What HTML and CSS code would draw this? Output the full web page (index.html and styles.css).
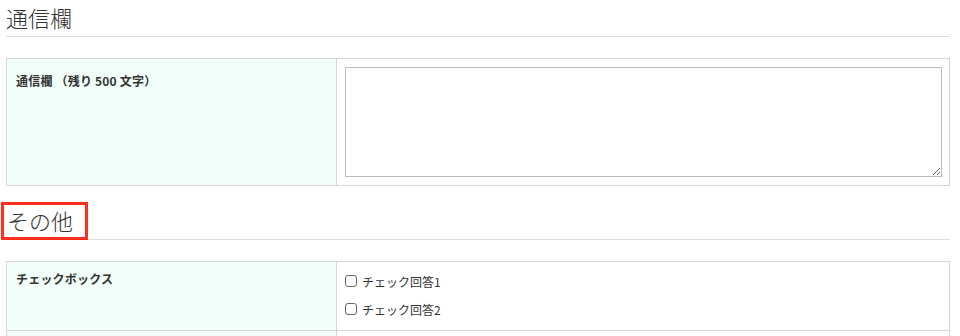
FILE: index.html
```html
<!DOCTYPE html>
<html lang="ja">
<head>
<meta charset="utf-8">
<title>フォーム</title>
<link rel="stylesheet" href="styles.css">
</head>
<body>
<div class="page">
  <h2 class="sec-title sec-title--first">通信欄</h2>
  <table class="form-table">
    <tr>
      <th class="label label--tall">通信欄 （残り 500 文字）</th>
      <td class="field field--textarea"><textarea class="memo"></textarea></td>
    </tr>
  </table>

  <h2 class="sec-title"><span class="hl">その他</span></h2>
  <table class="form-table">
    <tr>
      <th class="label">チェックボックス</th>
      <td class="field field--checks">
        <label class="check"><input type="checkbox" class="cb"><span>チェック回答1</span></label>
        <label class="check"><input type="checkbox" class="cb"><span>チェック回答2</span></label>
      </td>
    </tr>
    <tr>
      <th class="label">&nbsp;</th>
      <td class="field">&nbsp;</td>
    </tr>
  </table>
</div>
</body>
</html>
```

FILE: styles.css
```css
html, body {
  margin: 0;
  padding: 0;
  background: #fff;
}
body {
  font-family: "Noto Sans CJK JP", "Noto Sans", "Liberation Sans", sans-serif;
  color: #333;
}
.page {
  width: 944px;
  padding-left: 6px;
}
.sec-title {
  margin: 19px 0 0;
  padding: 0 0 4px;
  font-size: 22px;
  line-height: 30px;
  font-weight: 300;
  color: #333;
  border-bottom: 1px solid #dcdcdc;
}
.sec-title--first {
  margin-top: 2px;
}
.hl {
  position: relative;
  display: inline-block;
  padding-left: 1px;
}
.hl::after {
  content: "";
  position: absolute;
  left: -5px;
  top: -3px;
  width: 87px;
  height: 38px;
  box-sizing: border-box;
  border: 3px solid #ff2d1a;
}
.form-table {
  width: 100%;
  margin-top: 21px;
  border-collapse: collapse;
  table-layout: fixed;
}
.form-table th,
.form-table td {
  border: 1px solid #d6d6d6;
  vertical-align: top;
}
.label {
  width: 312px;
  padding: 9px 8px 8px 9px;
  background: #f1fff8;
  text-align: left;
  font-size: 12px;
  line-height: 16px;
  font-weight: bold;
  color: #333;
  letter-spacing: 0.2px;
}
.label--tall {
  padding-top: 14px;
}
.field {
  padding: 8px;
  font-size: 12px;
}
.field--textarea {
  padding: 8px 7px 8px 8px;
}
.memo {
  display: block;
  width: 100%;
  height: 110px;
  box-sizing: border-box;
  margin: 0;
  border: 1px solid #bdbdbd;
  background: #fff;
  font-family: inherit;
}
.field--checks {
  padding: 5px 8px 7px;
}
.check {
  display: flex;
  align-items: center;
  height: 28px;
  font-size: 12px;
  color: #333;
}
.cb {
  appearance: none;
  -webkit-appearance: none;
  width: 12px;
  height: 12px;
  margin: 0 5px 0 0;
  border: 1px solid #666;
  border-radius: 3px;
  background: #fff;
  box-sizing: border-box;
}
```
